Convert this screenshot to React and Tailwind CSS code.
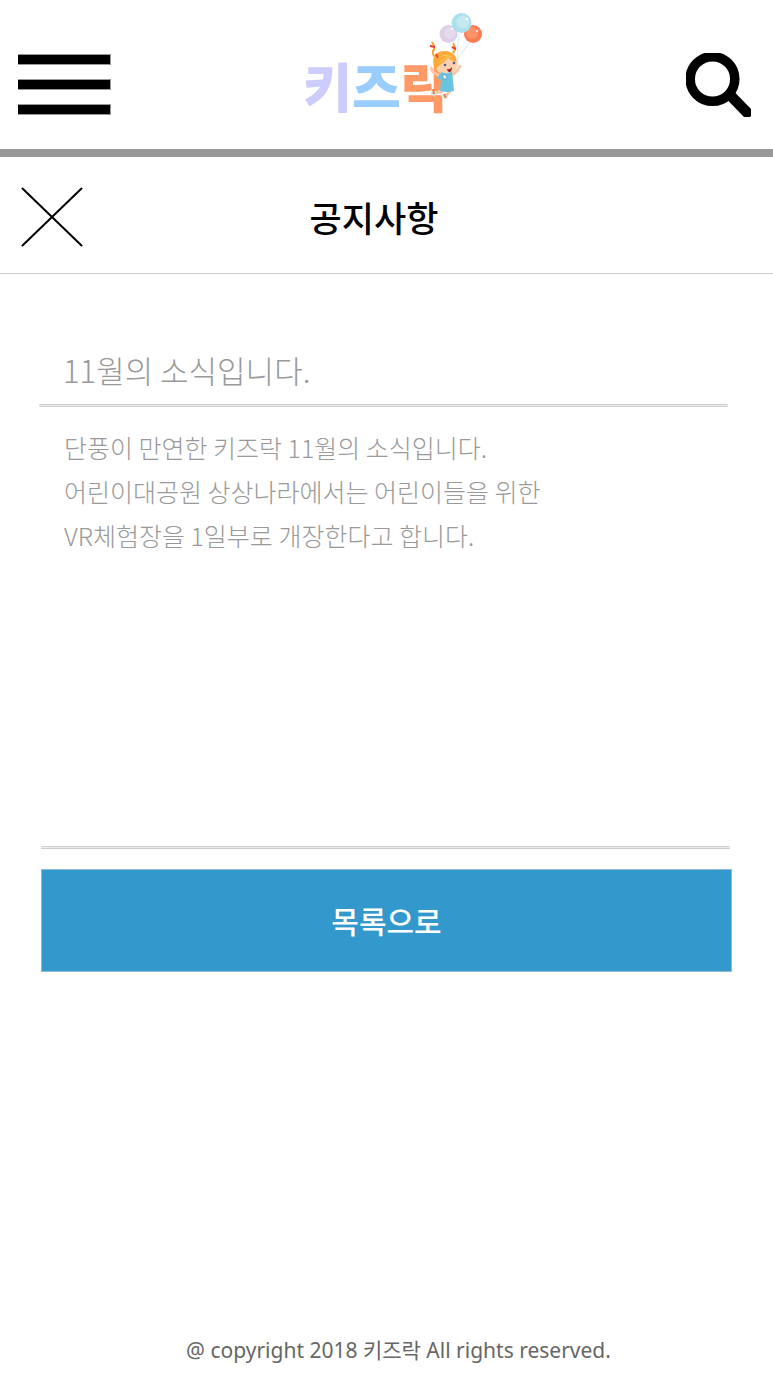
function MenuIcon() {
  return (
    <svg viewBox="0 0 93 62" className="block h-[62px] w-[93px]" aria-hidden="true">
      {[0, 25, 50].map((y) => (
        <g key={y}>
          <rect x="0" y={y} width="93" height="11" fill="#999" />
          <rect x="0" y={y + 1} width="92" height="9" fill="#000" />
        </g>
      ))}
    </svg>
  );
}

function SearchIcon() {
  return (
    <svg viewBox="0 0 65 64" className="block h-16 w-[65px]" aria-hidden="true">
      <circle cx="26.5" cy="26" r="22.3" fill="none" stroke="#000" strokeWidth="9.5" />
      <path d="M44 42 61 59.500" fill="none" stroke="#000" strokeWidth="10.500" strokeLinecap="round" />
    </svg>
  );
}

function CloseIcon() {
  return (
    <svg viewBox="0 0 62 60" className="block h-[60px] w-[62px]" aria-hidden="true">
      <path d="M1.5 1.5 60.5 58.5M60.5 1.5 1.5 58.5" fill="none" stroke="#000" strokeWidth="2" strokeLinecap="round" />
    </svg>
  );
}

function BalloonGirl() {
  return (
    <svg viewBox="422 10 64 96" className="absolute -top-[45px] left-[119px] h-24 w-16" aria-hidden="true">
      <g fill="none" stroke="#d3eff5" strokeWidth="1">
        <path d="M450 44 458 66M459 34Q456 50 458 66M469 43 457 60" />
      </g>
      <circle cx="448.500" cy="34" r="9" fill="#dccfe7" />
      <circle cx="450" cy="33" r="6" fill="#e4d9ed" />
      <circle cx="473" cy="34" r="9" fill="#fb7b52" />
      <circle cx="472" cy="33" r="6" fill="#ff9269" />
      <circle cx="461.500" cy="23" r="10" fill="#abdfeb" />
      <circle cx="463" cy="22" r="6.500" fill="#c3eaf1" />
      <circle cx="452" cy="29" r="1" fill="#fff" />
      <circle cx="467" cy="19" r="1.200" fill="#fff" />
      <circle cx="477" cy="31" r="1" fill="#fff" />
      <path d="M432 42Q436 48 433 51 432 56 437 57M453 43Q457 49 453 53" fill="none" stroke="#f8a42f" strokeWidth="2" />
      <path d="m430 46 5 1M452 47l4 2" stroke="#e63d2d" strokeWidth="2" />
      <path d="m438 75-5-3-2-4M452 75l5-4 3-5" fill="none" stroke="#fdc8a5" strokeWidth="3" strokeLinecap="round" />
      <path d="M441 91 436 93 434 95M450 91 445 97" fill="none" stroke="#fdc8a5" strokeWidth="3" strokeLinecap="round" />
      <circle cx="446" cy="63" r="11.500" fill="#fdd0ad" />
      <path d="M435 69C430 56 437 51 445 51 452 51 457 56 456 62 452 61 449 59 448 57 446 62 440 64 436 69Z" fill="#fbab37" />
      <path d="M437 59Q443 53 452 57M440 62Q446 59 448 55" fill="none" stroke="#ffc65d" />
      <path d="m436 54 2 4" stroke="#ee4930" strokeWidth="2" />
      <circle cx="445" cy="65" r="1.300" fill="#52627b" />
      <circle cx="454" cy="63" r="1.300" fill="#52627b" />
      <path d="M447 69q3 1 5-2-.2 5-2.500 5-2 0-2.500-3Z" fill="#9e2026" />
      <path d="M440 74 442 72Q447 75 452 71L454 91Q447 93 440 91L441 80 437 78Z" fill="#69c4df" />
      <path d="m442 75 2 4h3l-1-4Z" fill="#e8f5fa" stroke="#5686a0" strokeWidth=".6" />
      <path d="m431 93 5 0M442 97l4-2" stroke="#c8eef6" strokeWidth="4" />
      <path d="m433 89 1 5M444 94l2 4" stroke="#ee8142" strokeWidth="2" />
    </svg>
  );
}

function Logo() {
  return (
    <a href="#home" aria-label="키즈락" className="relative mr-4 flex text-[53px] leading-[60px] font-black">
      <span className="text-[#ccccff]">키</span>
      <span className="text-[#99ccff]">즈</span>
      <span className="text-[#ff9966]">락</span>
      <BalloonGirl />
    </a>
  );
}

export default function App() {
  return (
    <div className="flex min-h-screen flex-col bg-white font-['Noto_Sans_CJK_KR',sans-serif] text-black">
      <header className="grid grid-cols-[1fr_auto_1fr] items-center border-b-8 border-[#999] pt-[53px] pr-[22px] pb-8 pl-[18px]">
        <button type="button" aria-label="메뉴" className="justify-self-start">
          <MenuIcon />
        </button>
        <Logo />
        <button type="button" aria-label="검색" className="justify-self-end">
          <SearchIcon />
        </button>
      </header>

      <div className="grid grid-cols-[1fr_auto_1fr] items-center border-b border-[#ccc] pt-[30px] pr-[46px] pb-[26px] pl-[21px]">
        <button type="button" aria-label="닫기" className="justify-self-start">
          <CloseIcon />
        </button>
        <h1 className="text-[35px] leading-[60px] font-medium">공지사항</h1>
      </div>

      <main>
        <article className="text-[#999]">
          <h2 className="mr-[45px] ml-[39px] pt-[70px] pb-2 pl-6 text-[31px] leading-[52px] font-light">
            11월의 소식입니다.
          </h2>
          <hr className="mr-[45px] ml-[39px] h-[3px] rounded-sm border-y border-[#ccc] bg-[#eee]" />
          <p className="min-h-[439px] px-16 pt-[18px] text-[25px] leading-[44px] font-light">
            단풍이 만연한 키즈락 11월의 소식입니다.
            <br />
            어린이대공원 상상나라에서는 어린이들을 위한
            <br />
            VR체험장을 1일부로 개장한다고 합니다.
          </p>
        </article>
        <div className="mx-[41px]">
          <hr className="mr-0.5 h-[3px] rounded-sm border-y border-[#ccc] bg-[#eee]" />
          <a
            href="#list"
            className="mt-5 flex h-[103px] items-center justify-center border border-[#8bbbd8] bg-[#3399cc] text-[30px] font-medium text-white"
          >
            목록으로
          </a>
        </div>
      </main>

      <footer className="mt-auto pt-16 pb-6 pl-6 text-center font-['Noto_Sans','Noto_Sans_CJK_KR',sans-serif] text-[21px] leading-8 text-[#666]">
        @ copyright 2018 키즈락 All rights reserved.
      </footer>
    </div>
  );
}
